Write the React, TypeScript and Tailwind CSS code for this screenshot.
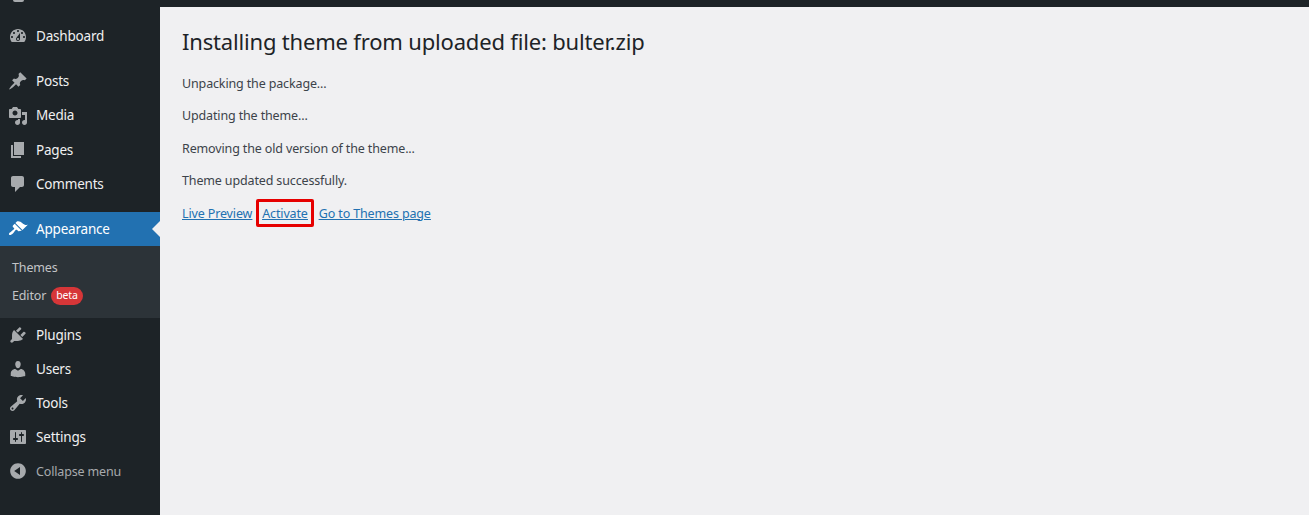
const F = '[font-family:"Noto_Sans",sans-serif]';

type Item = { label: string; d: string; h?: string };

const icons = {
  dashboard:
    "M3.76 16h12.48c1.1-1.37 1.76-3.11 1.76-5 0-4.42-3.58-8-8-8s-8 3.58-8 8c0 1.89.66 3.63 1.76 5zM10 4c.55 0 1 .45 1 1s-.45 1-1 1-1-.45-1-1 .45-1 1-1zM6 6c.55 0 1 .45 1 1s-.45 1-1 1-1-.45-1-1 .45-1 1-1zm8 0c.55 0 1 .45 1 1s-.45 1-1 1-1-.45-1-1 .45-1 1-1zm-5.37 5.55L12 7v6c0 1.1-.9 2-2 2s-2-.9-2-2c0-.57.24-1.08.63-1.45zM4 10c.55 0 1 .45 1 1s-.45 1-1 1-1-.45-1-1 .45-1 1-1zm12 0c.55 0 1 .45 1 1s-.45 1-1 1-1-.45-1-1 .45-1 1-1zm-5 3c0-.55-.45-1-1-1s-1 .45-1 1 .45 1 1 1 1-.45 1-1z",
  posts:
    "M10.44 3.02l1.82-1.82 6.36 6.35-1.83 1.82c-1.05-.68-2.48-.57-3.41.36l-.75.75c-.92.93-1.04 2.35-.35 3.41l-1.83 1.82-2.41-2.41-2.8 2.79c-.42.42-3.38 2.71-3.8 2.29s1.86-3.39 2.28-3.81l2.79-2.79L4.1 9.36l1.83-1.82c1.05.69 2.48.57 3.4-.36l.75-.75c.93-.92 1.05-2.35.36-3.41z",
  media:
    "M13 11V4c0-.55-.45-1-1-1h-1.67L9 1H5L3.67 3H2c-.55 0-1 .45-1 1v7c0 .55.45 1 1 1h10c.55 0 1-.45 1-1zM7 4.5c1.38 0 2.5 1.12 2.5 2.5S8.38 9.5 7 9.5 4.5 8.38 4.5 7 5.62 4.5 7 4.5zM14 6h5v10.5c0 1.38-1.12 2.5-2.5 2.5S14 17.88 14 16.5s1.12-2.5 2.5-2.5c.17 0 .34.02.5.05V9h-3V6zm-4 8.05V13h2v3.5c0 1.38-1.12 2.5-2.5 2.5S7 17.88 7 16.5 8.12 14 9.5 14c.17 0 .34.02.5.05z",
  pages: "M6 15V2h10v13H6zm-1 1h8v2H3V5h2v11z",
  comments:
    "M5 2h9c1.1 0 2 .9 2 2v7c0 1.1-.9 2-2 2h-2l-5 5v-5H5c-1.1 0-2-.9-2-2V4c0-1.1.9-2 2-2z",
  appearance:
    "M14.48 11.06L7.41 3.99l1.5-1.5c.5-.56 2.3-.47 3.51.32 1.21.8 1.43 1.28 2.91 2.1 1.18.64 2.45 1.26 4.45.85zm-.71.71L6.7 4.7 4.93 6.47c-.39.39-.39 1.02 0 1.41l1.06 1.06c.39.39.39 1.03 0 1.42-.6.6-1.43 1.11-2.21 1.69-.35.26-.7.53-1.01.84C1.43 13.23.4 14.98 1.21 15.8c.8.81 2.57-.23 3.91-1.57.31-.31.58-.66.85-1.02.57-.78 1.08-1.61 1.69-2.21.39-.39 1.02-.39 1.41 0l1.06 1.06c.39.39 1.02.39 1.41 0z",
  plugins:
    "M13.11 4.36L9.87 7.6 8 5.73l3.24-3.24c.35-.34 1.05-.2 1.56.32.52.51.66 1.21.31 1.55zm-8 1.77l.91-1.12 9.01 9.01-1.19.84c-.71.71-2.63 1.16-3.82 1.16H6.14L4.9 17.26c-.59.59-1.54.59-2.12 0-.59-.58-.59-1.53 0-2.12l1.24-1.24v-3.88c0-1.13.4-3.19 1.09-3.89zm7.26 3.97l3.24-3.24c.34-.35 1.04-.21 1.55.31.52.51.66 1.21.31 1.55l-3.24 3.25z",
  users:
    "M10 9.25c-2.27 0-2.73-3.44-2.73-3.44C7 4.02 7.82 2 9.97 2c2.16 0 2.98 2.02 2.71 3.81 0 0-.41 3.44-2.68 3.44zm0 2.57L12.72 10c2.39 0 4.52 2.33 4.52 4.53v2.49s-3.65 1.13-7.24 1.13c-3.65 0-7.24-1.13-7.24-1.13v-2.49c0-2.25 1.94-4.48 4.47-4.48z",
  tools:
    "M16.68 9.77c-1.34 1.34-3.3 1.67-4.95.99l-5.41 6.52c-.99.99-2.59.99-3.58 0s-.99-2.59 0-3.57l6.52-5.42c-.68-1.65-.35-3.61.99-4.95 1.28-1.28 3.12-1.62 4.72-1.06l-2.89 2.89 2.82 2.82 2.86-2.87c.53 1.58.18 3.39-1.08 4.65zM3.81 16.21c.4.39 1.04.39 1.43 0 .4-.4.4-1.04 0-1.43-.39-.4-1.03-.4-1.43 0-.39.39-.39 1.03 0 1.43z",
  settings:
    "M18 16V4c0-.55-.45-1-1-1H3c-.55 0-1 .45-1 1v12c0 .55.45 1 1 1h14c.55 0 1-.45 1-1zM8 11h1c.55 0 1 .45 1 1s-.45 1-1 1H8v1.5c0 .28-.22.5-.5.5s-.5-.22-.5-.5V13H6c-.55 0-1-.45-1-1s.45-1 1-1h1V5.5c0-.28.22-.5.5-.5s.5.22.5.5V11zm5-2h-1c-.55 0-1-.45-1-1s.45-1 1-1h1V5.5c0-.28.22-.5.5-.5s.5.22.5.5V7h1c.55 0 1 .45 1 1s-.45 1-1 1h-1v5.5c0 .28-.22.5-.5.5s-.5-.22-.5-.5V9z",
  collapse:
    "M10 2.16c4.33 0 7.84 3.51 7.84 7.84s-3.51 7.84-7.84 7.84S2.16 14.33 2.16 10 5.71 2.16 10 2.16zm2 11.72V6.12L6.18 9.97z",
};

function Icon({ d, className }: { d: string; className: string }) {
  return (
    <svg viewBox="0 0 20 20" className={`w-5 h-5 shrink-0 ${className}`} fill="currentColor" fillRule="evenodd">
      <path d={d} />
    </svg>
  );
}

function Row({ label, d, h = "h-[34px]" }: Item) {
  return (
    <div className={`flex items-center pl-2 text-[#f0f0f1] ${h}`}>
      <Icon d={d} className="text-[#a7aaad]" />
      <span className="ml-2 text-[13.5px] tracking-[-0.2px]">{label}</span>
    </div>
  );
}

export default function App() {
  return (
    <div className={`flex flex-col h-[515px] w-[1309px] overflow-hidden bg-[#1d2327] ${F}`}>
      <div className="h-[7px] shrink-0 bg-[#1d2327] pl-[13px]">
        <div className="h-[2px] w-[11px] rounded-b-full bg-[#a7aaad]" />
      </div>
      <div className="flex flex-1 min-h-0">
        <aside className="w-40 shrink-0 pt-3 bg-[#1d2327]">
          <Row label="Dashboard" d={icons.dashboard} />
          <div className="h-[11px]" />
          <Row label="Posts" d={icons.posts} />
          <Row label="Media" d={icons.media} h="h-[35px]" />
          <Row label="Pages" d={icons.pages} />
          <Row label="Comments" d={icons.comments} />
          <div className="h-[11px]" />
          <div className="relative flex items-center pl-2 h-[34px] bg-[#2271b1] text-white">
            <Icon d={icons.appearance} className="text-white" />
            <span className="ml-2 text-[13.5px] tracking-[-0.2px]">Appearance</span>
            <span className="absolute right-0 top-[9px] border-y-[8px] border-r-[8px] border-y-transparent border-r-[#f0f0f1]" />
          </div>
          <div className="h-[72px] bg-[#2c3338] pt-[8px] pl-3 text-[12.5px] tracking-[-0.15px] text-[#c3c4c7]">
            <div className="h-7 flex items-center">Themes</div>
            <div className="h-7 flex items-center">
              Editor
              <span className="ml-[5px] flex h-[18px] items-center rounded-full bg-[#d63638] px-[5px] text-[10.5px] text-white">
                beta
              </span>
            </div>
          </div>
          <Row label="Plugins" d={icons.plugins} />
          <Row label="Users" d={icons.users} />
          <Row label="Tools" d={icons.tools} />
          <Row label="Settings" d={icons.settings} />
          <div className="flex items-center pl-2 h-[34px] text-[#a7aaad]">
            <Icon d={icons.collapse} className="text-[#a7aaad]" />
            <span className="ml-2 pt-[2px] text-[12.5px] tracking-[-0.15px]">Collapse menu</span>
          </div>
        </aside>
        <main className="flex-1 bg-[#f0f0f2] pl-[22px] pt-[18px] text-[12.5px] text-[#3c434a]">
          <h1 className="text-[22px] leading-[32px] text-[#1d2327] tracking-[-0.18px]">
            Installing theme from uploaded file: bulter.zip
          </h1>
          <div className="mt-[11px] flex flex-col tracking-[-0.14px]">
            <p className="h-[32px] leading-[32px]">Unpacking the package...</p>
            <p className="h-[33px] leading-[32px]">Updating the theme...</p>
            <p className="h-[32px] leading-[32px]">Removing the old version of the theme...</p>
            <p className="h-[33px] leading-[32px]">Theme updated successfully.</p>
            <p className="flex items-center h-[32px] text-[#2271b1] underline">
              <a>Live Preview</a>
              <a className="relative ml-[10px]">
                Activate
                <span className="absolute -left-[6px] -right-[6px] -top-[6px] -bottom-[4px] rounded-[2px] border-[3px] border-[#e60000]" />
              </a>
              <a className="ml-[11px]">Go to Themes page</a>
            </p>
          </div>
        </main>
      </div>
    </div>
  );
}
